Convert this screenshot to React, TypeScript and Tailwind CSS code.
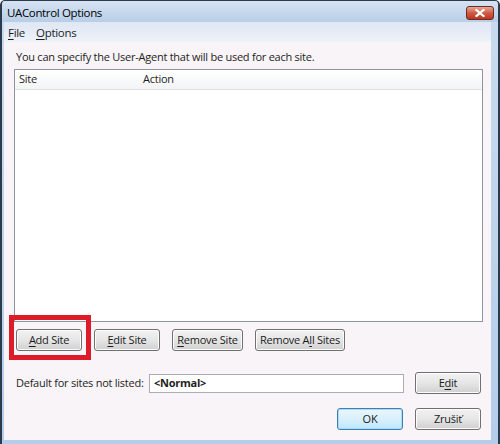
import React from "react";

const font = { fontFamily: '"Open Sans", "Noto Sans", sans-serif' };

function Btn({ w, children, def }: { w: string; children: React.ReactNode; def?: boolean }) {
  return (
    <div
      className={`${w} h-[22px] rounded-[3px] border flex items-center justify-center text-[11px] tracking-[-0.25px] text-[#1b1b1b] ${
        def
          ? "border-[#3c7fb1] bg-gradient-to-b from-[#eaf6fd] via-[#d9f0fc] to-[#bee6fd] shadow-[inset_0_0_0_1px_#a8dcf5]"
          : "border-[#707070] bg-gradient-to-b from-[#f2f2f2] via-[#e6e6e6] to-[#d0d0d0] shadow-[inset_0_0_0_1px_#fcfcfc]"
      }`}
    >
      <span className="whitespace-nowrap">{children}</span>
    </div>
  );
}

function U({ children }: { children: React.ReactNode }) {
  return <span className="underline underline-offset-2">{children}</span>;
}

export default function App() {
  return (
    <div
      className="w-[500px] h-[444px] flex flex-col border-t border-l-2 border-r-2 border-[#2b3a4d] bg-gradient-to-b from-[#c9dbef] to-[#b4cde9] rounded-t-[5px] overflow-hidden"
      style={font}
    >
      {/* title bar */}
      <div className="h-[21px] flex items-center justify-between pl-[5px] pr-[4px] bg-gradient-to-b from-[#d6e3f2] to-[#b8cee7]">
        <span className="text-[11.5px] tracking-[-0.35px] text-black leading-none mt-[3px]">UAControl Options</span>
        <div className="w-[28px] h-[14px] mt-[2px] rounded-[3px] border border-[#6e2b22] bg-gradient-to-b from-[#e6a898] via-[#cf5a46] to-[#b8361f] flex items-center justify-center">
          <svg width="10" height="8" viewBox="0 0 10 8">
            <path d="M1.5 1 L8.5 7 M8.5 1 L1.5 7" stroke="#ffffff" strokeWidth="2.2" strokeLinecap="square" />
          </svg>
        </div>
      </div>

      {/* client area */}
      <div className="flex-1 ml-[2px] mr-[7px] mb-[4px] bg-[#f8f4f7] flex flex-col text-[11px] tracking-[-0.25px] text-[#1e1e1e]">
        {/* menu */}
        <div className="h-[20px] flex items-center gap-[11px] pl-[4px] pt-[2px] text-[11.5px] tracking-[-0.3px] bg-gradient-to-b from-[#dfe7f4] to-[#eef2f9]">
          <span><U>F</U>ile</span>
          <span><U>O</U>ptions</span>
        </div>

        <div className="pl-[12px] pt-[7px] leading-[15px] whitespace-nowrap">
          You can specify the User-Agent that will be used for each site.
        </div>

        {/* list view */}
        <div className="ml-[10px] mr-[8px] mt-[5px] h-[253px] border border-[#8f959c] bg-white flex flex-col">
          <div className="h-[20px] flex items-center bg-gradient-to-b from-[#ffffff] to-[#f3f4f6] border-b border-[#e2e3e5]">
            <div className="w-[125px] pl-[4px] h-full flex items-center">Site</div>
            <div className="pl-[3px]">Action</div>
          </div>
        </div>

        {/* buttons */}
        <div className="flex gap-[12px] pl-[12px] mt-[7px]">
          <div className="relative">
            <Btn w="w-[66px]">
              <U>A</U>dd Site
            </Btn>
            <div className="absolute left-[-7px] top-[-14px] w-[82px] h-[45px] border-[5px] border-[#dd1c2a]" />
          </div>
          <Btn w="w-[66px]">
            <U>E</U>dit Site
          </Btn>
          <Btn w="w-[71px]">
            <U>R</U>emove Site
          </Btn>
          <Btn w="w-[90px]">
            Remove A<U>l</U>l Sites
          </Btn>
        </div>

        {/* default row */}
        <div className="flex items-center pl-[12px] pr-[10px] mt-[21px]">
          <span className="w-[133px] whitespace-nowrap">Default for sites not listed:</span>
          <div className="w-[255px] h-[19px] border border-[#abadb3] bg-white flex items-center pl-[4px] font-bold">
            &lt;Normal&gt;
          </div>
          <div className="ml-auto">
            <Btn w="w-[66px]">
              E<U>d</U>it
            </Btn>
          </div>
        </div>

        {/* ok / cancel */}
        <div className="flex justify-end gap-[12px] pr-[10px] mt-[14px]">
          <Btn w="w-[66px]" def>
            OK
          </Btn>
          <Btn w="w-[66px]">Zrušiť</Btn>
        </div>
      </div>
    </div>
  );
}
